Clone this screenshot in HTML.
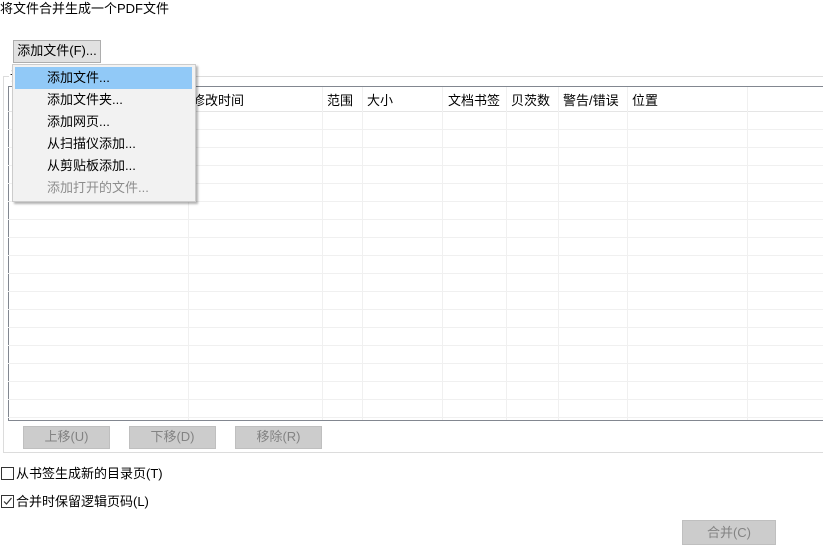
<!DOCTYPE html>
<html><head><meta charset="utf-8"><style>
*{margin:0;padding:0;box-sizing:border-box}
body{width:823px;height:545px;background:#fff;position:relative;overflow:hidden;font-family:"Liberation Sans","Microsoft YaHei","Noto Sans CJK SC",sans-serif;font-size:13px;color:#000}
.a{position:absolute;white-space:nowrap}
.btn{position:absolute;background:#e1e1e1;border:1px solid #adadad;text-align:center;line-height:20px}
.dis{background:#cccccc;border:1px solid #bfbfbf;color:#838383}
.hl{position:absolute;left:8px;width:815px;height:1px;background:#f0f0f0}
.vl{position:absolute;top:87px;width:1px;height:333px;background:#f0f0f0}
.hd{position:absolute;top:100px;line-height:1}
.mi{position:absolute;left:47px;line-height:14px}
</style></head><body>
<div class="a" style="left:0;top:1px;line-height:16px">将文件合并生成一个PDF文件</div>
<div class="btn" style="left:13px;top:40px;width:88px;height:23px">添加文件(F)...</div>
<div class="a" style="left:3px;top:76px;width:830px;height:377px;border:1px solid #dcdcdc"></div>
<div class="a" style="left:9px;top:70px;background:#fff;padding:0 1px;line-height:14px">设</div>
<div class="a" style="left:8px;top:86px;width:820px;height:335px;border:1px solid #828790;border-right:none;background:#fff"></div>
<div class="hl" style="top:111px;background:#e5e5e5"></div>
<div class="hl" style="top:129px"></div><div class="hl" style="top:147px"></div><div class="hl" style="top:165px"></div><div class="hl" style="top:183px"></div><div class="hl" style="top:201px"></div><div class="hl" style="top:219px"></div><div class="hl" style="top:237px"></div><div class="hl" style="top:255px"></div><div class="hl" style="top:273px"></div><div class="hl" style="top:291px"></div><div class="hl" style="top:309px"></div><div class="hl" style="top:327px"></div><div class="hl" style="top:345px"></div><div class="hl" style="top:363px"></div><div class="hl" style="top:381px"></div><div class="hl" style="top:399px"></div><div class="hl" style="top:417px"></div>
<div class="vl" style="left:188px"></div><div class="vl" style="left:322px"></div><div class="vl" style="left:362px"></div><div class="vl" style="left:442px"></div><div class="vl" style="left:506px"></div><div class="vl" style="left:558px"></div><div class="vl" style="left:627px"></div><div class="vl" style="left:747px"></div>
<div class="hd" style="left:192px;top:94px">修改时间</div>
<div class="hd" style="left:327px;top:94px">范围</div>
<div class="hd" style="left:367px;top:94px">大小</div>
<div class="hd" style="left:448px;top:94px">文档书签</div>
<div class="hd" style="left:511px;top:94px">贝茨数</div>
<div class="hd" style="left:563px;top:94px">警告/错误</div>
<div class="hd" style="left:632px;top:94px">位置</div>
<div class="a" style="left:12px;top:64px;width:184px;height:138px;background:#f2f2f2;border:1px solid #ccc;box-shadow:2px 2px 2px rgba(0,0,0,.3)"></div>
<div class="a" style="left:15px;top:67px;width:177px;height:22px;background:#91c9f7"></div>
<div class="mi" style="top:71px">添加文件...</div>
<div class="mi" style="top:93px">添加文件夹...</div>
<div class="mi" style="top:115px">添加网页...</div>
<div class="mi" style="top:137px">从扫描仪添加...</div>
<div class="mi" style="top:159px">从剪贴板添加...</div>
<div class="mi" style="top:181px;color:#8d8d8d">添加打开的文件...</div>
<div class="btn dis" style="left:23px;top:426px;width:87px;height:23px">上移(U)</div>
<div class="btn dis" style="left:129px;top:426px;width:87px;height:23px">下移(D)</div>
<div class="btn dis" style="left:235px;top:426px;width:87px;height:23px">移除(R)</div>
<div class="a" style="left:1px;top:467px;width:13px;height:13px;border:1px solid #333"></div>
<div class="a" style="left:16px;top:466px;line-height:16px">从书签生成新的目录页(T)</div>
<div class="a" style="left:1px;top:495px;width:13px;height:13px;border:1px solid #333"></div>
<svg class="a" style="left:1px;top:495px" width="13" height="13"><path d="M3 6.5l2.5 2.5 5-6" stroke="#333" stroke-width="1.2" fill="none"/></svg>
<div class="a" style="left:16px;top:494px;line-height:16px">合并时保留逻辑页码(L)</div>
<div class="btn dis" style="left:682px;top:520px;width:94px;height:25px;line-height:23px">合并(C)</div>
</body></html>
